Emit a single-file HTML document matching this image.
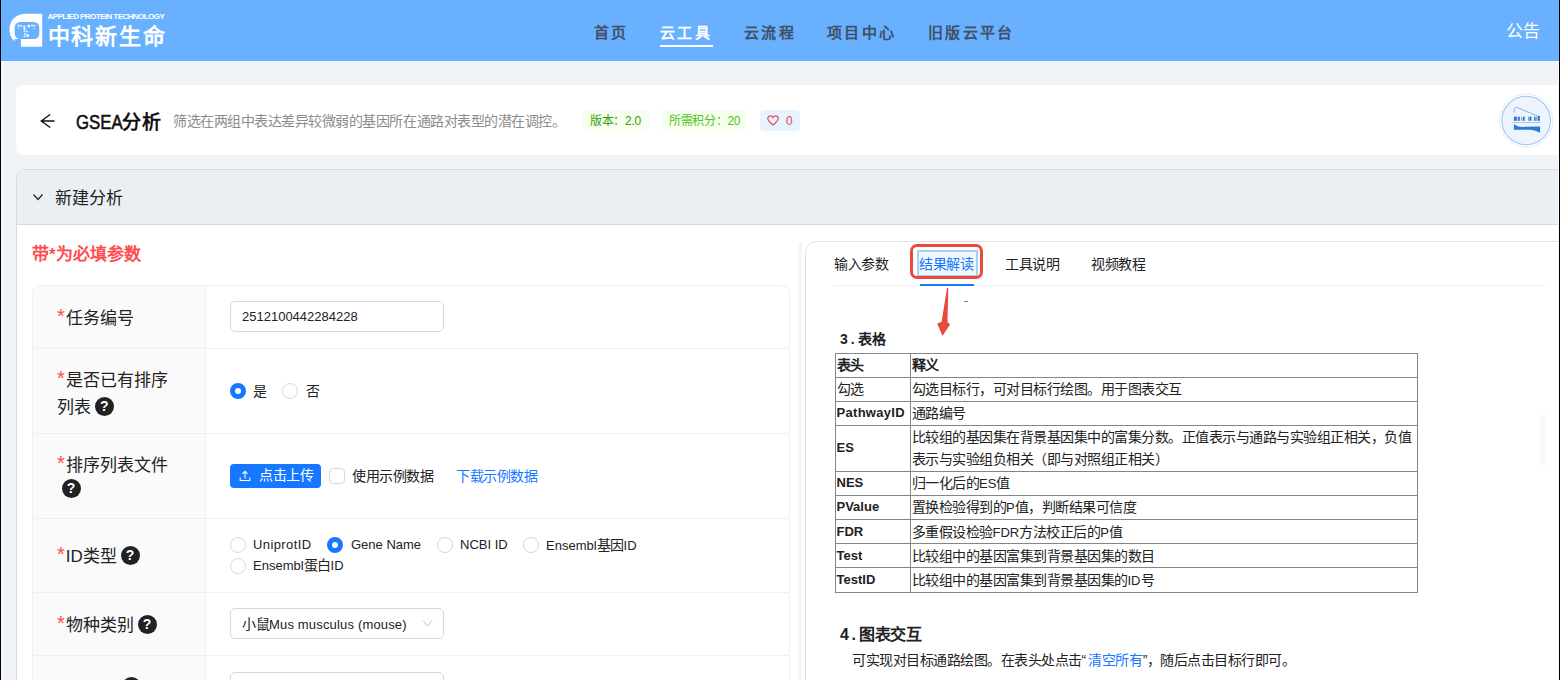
<!DOCTYPE html>
<html lang="zh-CN">
<head>
<meta charset="utf-8">
<title>GSEA分析</title>
<style>
*{box-sizing:border-box;margin:0;padding:0}
html,body{width:1560px;height:680px;overflow:hidden}
body{font-family:"Liberation Sans",sans-serif;background:#f0f4f8;color:#222;position:relative;font-size:14px}
.abs{position:absolute}
.nw{white-space:nowrap}
.c{font-size:14px;letter-spacing:-.5px}
.l{font-size:13px;letter-spacing:0;line-height:1}
#edgeL{left:0;top:0;width:1px;height:680px;background:#000;z-index:50}
#edgeR{left:1559px;top:0;width:1px;height:680px;background:#000;z-index:50}
#edgeR2{left:1558px;top:61px;width:1px;height:620px;background:#fdfdfd;z-index:50}
#edgeL2{left:1px;top:61px;width:1px;height:620px;background:#f8fafc;z-index:50}
#hdr{left:0;top:0;width:1560px;height:61px;background:#69b1ff}
.nav{top:22px;font-size:15px;font-weight:bold;letter-spacing:2.3px;color:#3f5068;line-height:22px}
.nav.on{color:#fff}
#card{left:16px;top:85px;width:1550px;height:70px;background:#fff;border-radius:8px}
.tag{top:110px;height:21px;border-radius:4px;font-size:12px;line-height:23px;padding:0 7px;letter-spacing:-.3px}
#col{left:16px;top:169px;width:1550px;height:520px;border:1px solid #d5dade;border-radius:8px 0 0 0;background:#fff;overflow:hidden}
#colh{left:0;top:0;width:1550px;height:55px;background:#eaeff3;border-bottom:1px solid #d5dade}
#form{left:32px;top:285px;width:758px;height:400px;border:1px solid #f0f0f0;border-radius:8px 8px 0 0;background:#fff;overflow:hidden}
#lab{left:0;top:0;width:173px;height:400px;background:#fafafa;border-right:1px solid #f0f0f0}
.hl{left:0;width:758px;height:1px;background:#f0f0f0}
.lb{left:24px;font-size:17px;line-height:27px;color:#222;letter-spacing:0}
.lb i{color:#ff4d4f;font-style:normal;font-size:20px;line-height:20px;vertical-align:1.5px;margin-right:1px}
.q{display:inline-block;width:19px;height:19px;border-radius:50%;background:#222;color:#fff;font-size:14px;font-weight:bold;line-height:19px;text-align:center;vertical-align:2px;letter-spacing:0;margin-left:-1px;position:relative;top:-.5px}
.inp{left:197px;width:214px;height:31px;border:1px solid #d9d9d9;border-radius:5px;background:#fff;font-size:13px;line-height:29px;padding-left:11px;color:#222}
.rd{width:16px;height:16px;border:1px solid #d9d9d9;border-radius:50%;background:#fff}
.rd.on{border:5px solid #1677ff}
.rt{font-size:13px;line-height:20px;color:#222}
#rp{left:805px;top:241px;width:770px;height:460px;border:1px solid #e2e2e2;border-radius:12px 0 0 0;background:#fff}
.tab{top:254px;font-size:14px;line-height:20px;color:#222;letter-spacing:-.4px}
table{border-collapse:collapse;position:absolute;left:834.500px;top:352.500px;width:583px;font-size:14px;color:#222}
td{border:1px solid #858585;padding:0 0 0 1px;height:24.150px;line-height:22.500px;letter-spacing:-.5px;vertical-align:middle}
td.b{font-weight:bold}
td.e{font-size:13px;letter-spacing:0}
</style>
</head>
<body>
<div id="hdr" class="abs"></div>

<!-- logo -->
<svg class="abs" style="left:0;top:0" width="56" height="56" viewBox="0 0 56 56">
 <path d="M27 13.800L42.200 13.800L42.200 46.800L20.900 46.800L20.900 39L14.700 39L14.700 41.300C11 38.500 9.500 34 9.500 29.300C9.500 20 16 13.800 27 13.800Z" fill="#fff"/>
 <rect x="14.700" y="21.900" width="24.600" height="17.100" rx="5.500" fill="#69b1ff"/>
 <g fill="#fff" opacity=".92"><circle cx="18.600" cy="25.700" r="1.100"/><circle cx="21.300" cy="25.900" r="1"/><circle cx="24.200" cy="26.300" r="1.100"/><circle cx="28.800" cy="25.900" r="1.500"/><circle cx="32" cy="25.600" r="1"/><circle cx="34.400" cy="25.800" r="1"/><circle cx="24.600" cy="28.800" r="1.300"/><circle cx="24.400" cy="31.300" r=".9"/><circle cx="26.600" cy="31.600" r="1"/><circle cx="25" cy="34" r=".9"/><circle cx="27.600" cy="35.600" r="1.500"/><circle cx="24.500" cy="36.200" r=".9"/><circle cx="34" cy="28.500" r=".7"/><circle cx="18.500" cy="28.400" r=".7"/></g>
</svg>
<div class="abs nw" style="left:47.600px;top:12px;font-size:8px;font-weight:bold;color:#fff;line-height:10px;letter-spacing:-.56px">APPLIED PROTEIN TECHNOLOGY</div>
<div class="abs nw" style="left:47.500px;top:22px;font-size:22px;font-weight:bold;color:#fff;line-height:30px;letter-spacing:1.9px">中科新生命</div>

<div class="abs nw nav" style="left:594px">首页</div>
<div class="abs nw nav on" style="left:660px">云工具</div>
<div class="abs" style="left:660px;top:45px;width:53px;height:2px;background:#fff"></div>
<div class="abs nw nav" style="left:744px">云流程</div>
<div class="abs nw nav" style="left:827px">项目中心</div>
<div class="abs nw nav" style="left:928px">旧版云平台</div>
<div class="abs nw" style="left:1506px;top:20px;font-size:17px;color:#fff;line-height:24px">公告</div>

<!-- title card -->
<div id="card" class="abs"></div>
<svg class="abs" style="left:40px;top:112.700px" width="16" height="16" viewBox="0 0 16 16"><path d="M14.500 8H1.500M10.200 1.500L1.300 8l8.900 6.500" fill="none" stroke="#111" stroke-width="1.400"/></svg>
<div class="abs nw" style="left:75.500px;top:108.300px;font-size:19px;font-weight:bold;color:#111;line-height:28px;letter-spacing:.9px"><span style="display:inline-block;font-size:20px;font-weight:normal;-webkit-text-stroke:.55px #111;letter-spacing:0;transform:scaleX(.84);transform-origin:0 50%;margin-right:-8.700px">GSEA</span>分析</div>
<div class="abs nw" style="left:173px;top:111px;font-size:14px;color:#8c8c8c;line-height:20px;letter-spacing:-.47px">筛选在两组中表达差异较微弱的基因所在通路对表型的潜在调控。</div>
<div class="abs nw tag" style="left:583px;width:66px;background:#f6ffed;color:#389e0d">版本：2.0</div>
<div class="abs nw tag" style="left:661px;width:86px;padding-left:8px;background:#f6ffed;color:#52c41a">所需积分：20</div>
<div class="abs nw tag" style="left:760px;width:40px;background:#e6f4ff;color:#f5405a"><svg width="12" height="11" viewBox="0 0 12 11" style="vertical-align:-1px;margin-right:7px"><path d="M6 10C2 7 .8 5.300 .8 3.600C.8 2 2 .9 3.400 .9C4.500 .9 5.500 1.600 6 2.600C6.500 1.600 7.500 .9 8.600 .9C10 .9 11.200 2 11.200 3.600C11.200 5.300 10 7 6 10Z" fill="none" stroke="#f5405a" stroke-width="1.2"/></svg>0</div>

<!-- tool icon -->
<svg class="abs" style="left:1495px;top:90px" width="64" height="62" viewBox="0 0 64 62">
 <circle cx="31.200" cy="30.500" r="26.600" fill="#fff" stroke="#e3edfb" stroke-width="1"/>
 <circle cx="31.200" cy="30.500" r="24.300" fill="#eef4fc" stroke="#a3c4ef" stroke-width="1.100"/>
 <path d="M19 22.800C19.200 19 20 17.200 21.200 17.300L42.800 26" fill="none" stroke="#5b8fdc" stroke-width=".7"/>
 <g fill="#2f78d6"><rect x="18.900" y="26.700" width="3" height="4.100"/><rect x="22.800" y="26.700" width="2" height="4.100"/><rect x="26" y="26.700" width="1.300" height="4.100" opacity=".6"/><rect x="28" y="26.700" width="1.700" height="4.100"/><rect x="33" y="26.700" width="1.600" height="4.100" opacity=".6"/><rect x="34.600" y="26.700" width="1.900" height="4.100"/><rect x="39" y="26.700" width="1.600" height="4.100"/><rect x="41" y="26.700" width="1.100" height="4.100" opacity=".6"/><rect x="42.600" y="25.900" width="2.300" height="4.900"/></g>
 <rect x="17.300" y="32" width="28.800" height="1" fill="#a8c6f0"/>
 <path d="M18.900 33.900C21.500 36 24 36.900 27.300 36.900L45.100 36.500L45.100 42.700C41 40.700 38 39.700 34.600 39.700L18.900 39.700Z" fill="#2f78d6"/>
</svg>

<!-- collapse -->
<div id="col" class="abs"><div id="colh" class="abs"></div></div>
<svg class="abs" style="left:32px;top:192px" width="12" height="10" viewBox="0 0 12 10"><path d="M1.500 2.500L6 7.500l4.500-5" fill="none" stroke="#222" stroke-width="1.200"/></svg>
<div class="abs nw" style="left:55px;top:186px;font-size:17px;color:#222;line-height:26px;letter-spacing:0">新建分析</div>
<div class="abs nw" style="left:32px;top:242px;font-size:17px;font-weight:bold;color:#ff4d4f;line-height:26px;letter-spacing:0">带*为必填参数</div>

<!-- form -->
<div id="form" class="abs">
 <div id="lab" class="abs"></div>
 <div class="abs hl" style="top:62px"></div>
 <div class="abs hl" style="top:147px"></div>
 <div class="abs hl" style="top:232px"></div>
 <div class="abs hl" style="top:306px"></div>
 <div class="abs hl" style="top:369px"></div>

 <div class="abs nw lb" style="top:19px"><i>*</i>任务编号</div>
 <div class="abs nw inp" style="top:15px">2512100442284228</div>

 <div class="abs nw lb" style="top:81px"><i>*</i>是否已有排序<br>列表 <span class="q">?</span></div>
 <div class="abs rd on" style="left:197px;top:97px"></div><div class="abs nw rt" style="left:220px;top:95px"><span class="c">是</span></div>
 <div class="abs rd" style="left:249px;top:97px"></div><div class="abs nw rt" style="left:273px;top:95px"><span class="c">否</span></div>

 <div class="abs nw lb" style="top:166px"><i>*</i>排序列表文件<br><span class="q" style="margin-left:4.500px;top:-2.700px">?</span></div>
 <div class="abs nw" style="left:197px;top:178px;width:91px;height:24px;background:#1677ff;border-radius:4px;color:#fff;font-size:14px;line-height:23px;letter-spacing:-.3px;padding-left:29px">点击上传<svg class="abs" style="left:9px;top:6px" width="12" height="12" viewBox="0 0 12 12"><path d="M6 8.500V1.500M3.500 3.800L6 1.300l2.500 2.500M1.200 7.500V10.500H10.800V7.500" fill="none" stroke="#fff" stroke-width="1.100"/></svg></div>
 <div class="abs" style="left:296px;top:182px;width:16px;height:16px;border:1px solid #d9d9d9;border-radius:4px;background:#fff"></div>
 <div class="abs nw rt" style="left:319px;top:180px;font-size:14px;letter-spacing:-.5px">使用示例数据</div>
 <div class="abs nw rt" style="left:423px;top:180px;color:#1677ff;font-size:14px;letter-spacing:-.4px">下载示例数据</div>

 <div class="abs nw lb" style="top:257px"><i>*</i>ID类型 <span class="q">?</span></div>
 <div class="abs rd" style="left:197px;top:251px"></div><div class="abs nw rt" style="left:220px;top:249px;letter-spacing:.4px">UniprotID</div>
 <div class="abs rd on" style="left:294px;top:251px"></div><div class="abs nw rt" style="left:318px;top:249px">Gene Name</div>
 <div class="abs rd" style="left:404px;top:251px"></div><div class="abs nw rt" style="left:427px;top:249px">NCBI ID</div>
 <div class="abs rd" style="left:490px;top:251px"></div><div class="abs nw rt" style="left:513px;top:249px">Ensembl<span class="c">基因</span>ID</div>
 <div class="abs rd" style="left:197px;top:271.500px"></div><div class="abs nw rt" style="left:220px;top:269.300px">Ensembl<span class="c">蛋白</span>ID</div>

 <div class="abs nw lb" style="top:326px"><i>*</i>物种类别 <span class="q">?</span></div>
 <div class="abs nw inp" style="top:322px;line-height:31px;letter-spacing:.17px"><span class="c">小鼠</span>Mus musculus (mouse)<svg class="abs" style="left:191px;top:10px" width="11" height="9" viewBox="0 0 11 9"><path d="M1 1.500L5.500 7l4.500-5.500" fill="none" stroke="#c4c4c4" stroke-width="1"/></svg></div>

 <div class="abs q" style="left:90px;top:391px;display:block">?</div>
 <div class="abs nw inp" style="top:385.5px"></div>
</div>

<!-- divider -->
<div class="abs" style="left:798px;top:242px;width:4px;height:440px;background:#f6f6f6;border-radius:2px 2px 0 0"></div>

<!-- right panel -->
<div id="rp" class="abs"></div>
<div class="abs nw tab" style="left:834px">输入参数</div>
<div class="abs" style="left:917px;top:250px;width:60.500px;height:27px;background:#f2f7fe;border:2px solid #a9cef7"></div>
<div class="abs nw tab" style="left:919px;color:#1677ff">结果解读</div>
<div class="abs nw tab" style="left:1005px">工具说明</div>
<div class="abs nw tab" style="left:1091px">视频教程</div>
<div class="abs" style="left:834px;top:285px;width:712px;height:1px;background:#f0f0f0"></div>
<div class="abs" style="left:919.500px;top:283.500px;width:54.500px;height:2px;background:#1677ff"></div>
<div class="abs" style="left:909.700px;top:243.500px;width:73.300px;height:35.700px;border:3.300px solid #ea4a3e;border-radius:7px"></div>
<svg class="abs" style="left:930px;top:284px" width="30" height="56" viewBox="930 284 30 56"><path d="M947 288L948.300 288L947.500 322.200L950.200 324.300L942.500 336L937.200 323.500L941.600 321.800Z" fill="#ea4a3e"/></svg>
<div class="abs" style="left:963.700px;top:300.800px;width:4.300px;height:1px;background:#3f8cf0"></div>

<div class="abs nw" style="left:840px;top:329px;font-size:14px;font-weight:bold;color:#222;line-height:20px">3<span style="margin:0 3px 0 3px">.</span>表格</div>
<table>
<tr><td class="b" style="width:75px">表头</td><td class="b">释义</td></tr>
<tr><td>勾选</td><td>勾选目标行，可对目标行绘图。用于图表交互</td></tr>
<tr><td class="b e" style="letter-spacing:.3px">PathwayID</td><td>通路编号</td></tr>
<tr><td class="b e">ES</td><td>比较组的基因集在背景基因集中的富集分数。正值表示与通路与实验组正相关，负值<br>表示与实验组负相关（即与对照组正相关）</td></tr>
<tr><td class="b e">NES</td><td>归一化后的<span class="l">ES</span>值</td></tr>
<tr><td class="b e">PValue</td><td>置换检验得到的<span class="l">P</span>值，判断结果可信度</td></tr>
<tr><td class="b e">FDR</td><td>多重假设检验<span class="l">FDR</span>方法校正后的<span class="l">P</span>值</td></tr>
<tr><td class="b e">Test</td><td>比较组中的基因富集到背景基因集的数目</td></tr>
<tr><td class="b e">TestID</td><td>比较组中的基因富集到背景基因集的<span class="l">ID</span>号</td></tr>
</table>

<div class="abs nw" style="left:840px;top:624px;font-size:16px;font-weight:bold;color:#222;line-height:22px;letter-spacing:-.5px">4<span style="margin:0 4px 0 3px">.</span>图表交互</div>
<div class="abs nw" style="left:852px;top:650px;font-size:14px;color:#222;line-height:20px;letter-spacing:-.5px">可实现对目标通路绘图。在表头处点击“<span style="color:#1677ff;margin:0 .5px 0 2.500px">清空所有</span>”，随后点击目标行即可。</div>

<!-- scrollbar thumb -->
<div class="abs" style="left:1540px;top:414px;width:6px;height:52px;background:#fafafa;border-radius:3px"></div>

<div id="edgeL" class="abs"></div><div id="edgeR" class="abs"></div><div id="edgeR2" class="abs"></div><div id="edgeL2" class="abs"></div>
</body>
</html>
